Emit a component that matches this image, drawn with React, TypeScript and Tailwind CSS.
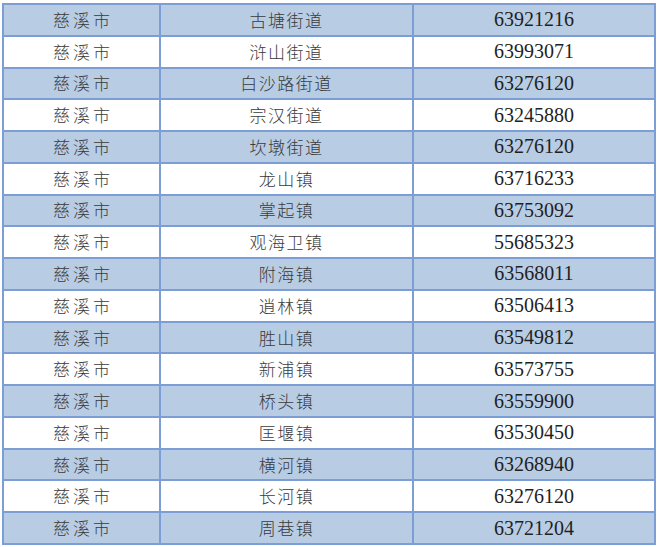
const rows: [string, string, string][] = [
  ["慈溪市", "古塘街道", "63921216"],
  ["慈溪市", "浒山街道", "63993071"],
  ["慈溪市", "白沙路街道", "63276120"],
  ["慈溪市", "宗汉街道", "63245880"],
  ["慈溪市", "坎墩街道", "63276120"],
  ["慈溪市", "龙山镇", "63716233"],
  ["慈溪市", "掌起镇", "63753092"],
  ["慈溪市", "观海卫镇", "55685323"],
  ["慈溪市", "附海镇", "63568011"],
  ["慈溪市", "逍林镇", "63506413"],
  ["慈溪市", "胜山镇", "63549812"],
  ["慈溪市", "新浦镇", "63573755"],
  ["慈溪市", "桥头镇", "63559900"],
  ["慈溪市", "匡堰镇", "63530450"],
  ["慈溪市", "横河镇", "63268940"],
  ["慈溪市", "长河镇", "63276120"],
  ["慈溪市", "周巷镇", "63721204"],
];

const cjk = "[font-family:'Noto_Sans_CJK_SC',sans-serif]";

export default function App() {
  return (
    <div className="w-[660px] h-[547px] bg-white pt-[3px] pl-[2px] overflow-hidden">
      <div className="w-[654px] h-[542px] grid grid-rows-[repeat(17,minmax(0,1fr))] border-l-2 border-r-2 border-b-2 border-[#7d9dd5]">
        {rows.map(([city, town, phone], i) => (
          <div
            key={i}
            className={`min-h-0 grid grid-cols-[155px_253px_1fr] border-t-2 border-[#7d9dd5] leading-none ${
              i % 2 === 0 ? "bg-[#b8cce4]" : "bg-white"
            }`}
          >
            <div
              className={`flex items-center justify-center pl-[3px] pb-[1px] text-[17px] tracking-[3px] text-[#3a3a3a] font-light ${cjk}`}
            >
              {city}
            </div>
            <div
              className={`flex items-center justify-center pb-[1px] border-l-2 border-[#7d9dd5] text-[17px] tracking-[1.5px] text-[#3a3a3a] font-light ${cjk}`}
            >
              {town}
            </div>
            <div className="flex items-center justify-center pb-[1px] border-l-2 border-[#7d9dd5] text-[20px] text-[#1f1f1f] [font-family:'Liberation_Serif',serif]">
              {phone}
            </div>
          </div>
        ))}
      </div>
    </div>
  );
}
